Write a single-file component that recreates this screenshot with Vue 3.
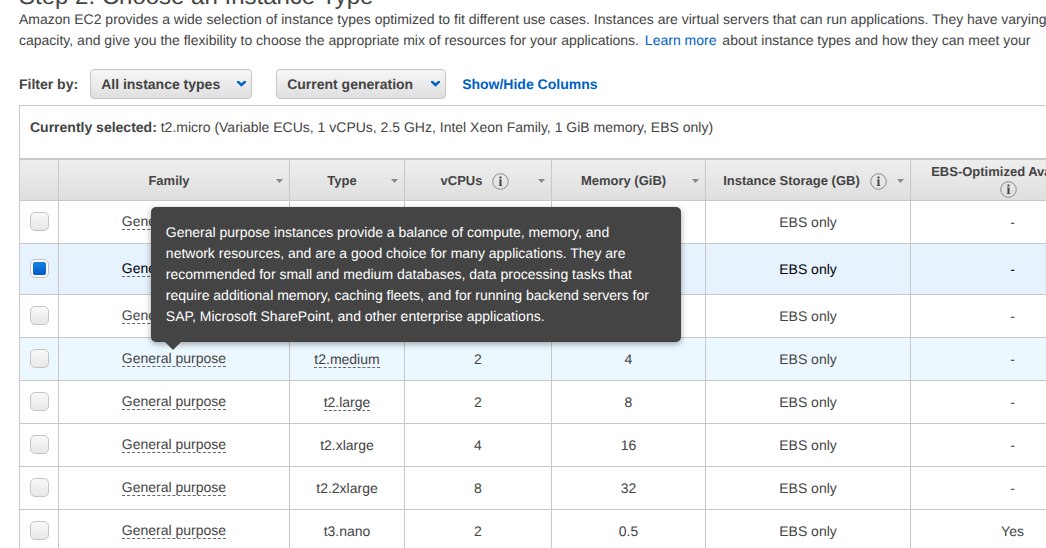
<script setup>
import { ref } from 'vue'

const columns = [
  { label: 'Family', info: false, sortable: true },
  { label: 'Type', info: false, sortable: true },
  { label: 'vCPUs', info: true, sortable: true },
  { label: 'Memory (GiB)', info: false, sortable: true },
  { label: 'Instance Storage (GB)', info: true, sortable: true },
  { label: 'EBS-Optimized Available', info: true, sortable: false },
]

const rows = [
  { type: 't2.nano', hint: true, cpu: '1', memory: '0.5', ebs: '-' },
  { type: 't2.micro', hint: true, cpu: '1', memory: '1', ebs: '-' },
  { type: 't2.small', hint: true, cpu: '1', memory: '2', ebs: '-' },
  { type: 't2.medium', hint: true, cpu: '2', memory: '4', ebs: '-' },
  { type: 't2.large', hint: true, cpu: '2', memory: '8', ebs: '-' },
  { type: 't2.xlarge', hint: false, cpu: '4', memory: '16', ebs: '-' },
  { type: 't2.2xlarge', hint: false, cpu: '8', memory: '32', ebs: '-' },
  { type: 't3.nano', hint: false, cpu: '2', memory: '0.5', ebs: 'Yes' },
]

const selected = ref('t2.micro')
const hovered = ref('t2.medium')
</script>

<template>
  <main class="page">
    <h1 class="title">Step 2: Choose an Instance Type</h1>
    <p class="intro">
      Amazon EC2 provides a wide selection of instance types optimized to fit different use cases. Instances are virtual servers that can run applications. They have varying<br>
      capacity, and give you the flexibility to choose the appropriate mix of resources for your applications. <a class="learn" href="#">Learn more</a> about instance types and how they can meet your
    </p>

    <div class="filters">
      <span class="filter-label">Filter by:</span>
      <button class="filter types" type="button">
        All instance types
        <svg class="chevron" width="9" height="6" viewBox="0 0 9 6"><path d="M0 0H2L4.500 2.300L7 0H9V1.500L4.500 5.800L0 1.500Z" /></svg>
      </button>
      <button class="filter generation" type="button">
        Current generation
        <svg class="chevron" width="9" height="6" viewBox="0 0 9 6"><path d="M0 0H2L4.500 2.300L7 0H9V1.500L4.500 5.800L0 1.500Z" /></svg>
      </button>
      <a class="columns-link" href="#">Show/Hide Columns</a>
    </div>

    <section class="panel">
      <p class="current"><strong>Currently selected:</strong> t2.micro (Variable ECUs, 1 vCPUs, 2.5 GHz, Intel Xeon Family, 1 GiB memory, EBS only)</p>

      <table class="grid">
        <colgroup>
          <col class="c-check"><col class="c-family"><col class="c-type"><col class="c-cpu">
          <col class="c-memory"><col class="c-storage"><col class="c-ebs">
        </colgroup>
        <thead>
          <tr>
            <th></th>
            <th v-for="col in columns" :key="col.label">
              <div class="head" :class="{ stacked: !col.sortable, 'with-info': col.info && col.sortable }">
                <span class="head-label">
                  <span>{{ col.label }}</span>
                  <svg v-if="col.info" class="info" width="17" height="17" viewBox="0 0 17 17">
                    <circle cx="8.500" cy="8.500" r="7.800" />
                    <path d="M7.500 3.500H9.500V5.500H7.500ZM7 6.500H9.500V12.200H10.200V13H6.800V12.200H7.500V7.300H7Z" />
                  </svg>
                </span>
                <svg v-if="col.sortable" class="sort" width="7" height="4" viewBox="0 0 7 4"><path d="M0 0H7L3.500 4Z" /></svg>
              </div>
            </th>
          </tr>
        </thead>
        <tbody>
          <tr
            v-for="row in rows"
            :key="row.type"
            :class="{ selected: row.type === selected, hovered: row.type === hovered }"
          >
            <td><input v-model="selected" class="check" type="radio" name="instance" :value="row.type" :aria-label="row.type"></td>
            <td class="family">
              <span class="hint">General purpose<span v-if="row.type === hovered" class="tip" role="tooltip">General purpose instances provide a balance of compute, memory, and network resources, and are a good choice for many applications. They are recommended for small and medium databases, data processing tasks that require additional memory, caching fleets, and for running backend servers for SAP, Microsoft SharePoint, and other enterprise applications.</span></span>
            </td>
            <td><span :class="{ hint: row.hint }">{{ row.type }}</span></td>
            <td>{{ row.cpu }}</td>
            <td>{{ row.memory }}</td>
            <td>EBS only</td>
            <td>{{ row.ebs }}</td>
          </tr>
        </tbody>
      </table>
    </section>
  </main>
</template>

<style>
html,
body {
  margin: 0;
  height: 100%;
  overflow: hidden;
  background: #fff;
}
</style>

<style scoped>
.page {
  height: 100vh;
  overflow: hidden;
  padding-left: 19px;
  box-sizing: border-box;
  color: #444;
  font: 14px/21px "Liberation Sans", Arial, sans-serif;
  text-rendering: geometricPrecision;
}

.title {
  margin: -15px 0 0;
  font-size: 24px;
  line-height: 24px;
  font-weight: 400;
  white-space: nowrap;
}

.intro {
  margin: 0;
  white-space: nowrap;
}

a {
  color: #0061c8;
  text-decoration: none;
}

.learn {
  margin: 0 2px;
}

.filters {
  display: flex;
  align-items: center;
  margin-top: 18px;
  font-weight: 700;
}

.filter-label {
  margin-right: 12px;
}

.filter {
  display: flex;
  align-items: center;
  justify-content: space-between;
  height: 30px;
  padding: 0 5px 0 10px;
  border: 1px solid #c5c5c5;
  border-radius: 4px;
  background: linear-gradient(#f7f7f7, #dfdfdf);
  color: #444;
  font: inherit;
  text-rendering: inherit;
  white-space: nowrap;
}

.types {
  width: 162px;
  margin-right: 24px;
}

.generation {
  width: 170px;
  margin-right: 16px;
}

.chevron {
  fill: #0061c8;
}

.panel {
  margin-top: 6px;
  border-top: 1px solid #c8c8c8;
  border-left: 1px solid #c8c8c8;
}

.current {
  margin: 0;
  padding: 11px 10px 20px;
  white-space: nowrap;
}

.grid {
  width: 100%;
  min-width: 1095px;
  table-layout: fixed;
  border-collapse: separate;
  border-spacing: 0;
  border-top: 2px solid #c8c8c8;
}

.c-check { width: 39px; }
.c-family { width: 231px; }
.c-type { width: 115px; }
.c-cpu { width: 147px; }
.c-memory { width: 154px; }
.c-storage { width: 205px; }

th,
td {
  padding: 0;
  border-right: 1px solid #c8c8c8;
  border-bottom: 1px solid #c8c8c8;
  text-align: center;
  vertical-align: middle;
}

th {
  height: 40px;
  background: linear-gradient(#eee, #dfdfdf);
  font-size: 13px;
  line-height: 20px;
}

.head {
  display: flex;
  align-items: center;
  padding: 2px 6px 0 3px;
  white-space: nowrap;
}

.with-info {
  padding-left: 7px;
}

.head-label {
  flex: 1;
  display: flex;
  align-items: center;
  justify-content: center;
  gap: 10px;
}

.stacked {
  padding: 0 10px 0 1px;
}

.stacked .head-label {
  flex-direction: column;
  gap: 0;
  line-height: 18px;
}

.info circle {
  fill: none;
  stroke: #8a8a8a;
}

.info path {
  fill: #444;
}

.sort {
  fill: #888;
}

td {
  height: 42px;
}

.selected td {
  height: 50px;
  background: #e7f2ff;
  color: #000;
}

.hovered td {
  background: #ecf8ff;
}

.hint {
  display: inline-block;
  position: relative;
  line-height: 16px;
  border-bottom: 1px dashed #666;
}

.family {
  padding-bottom: 2px;
  height: 40px;
}

.selected .family {
  height: 48px;
}

.check {
  display: block;
  appearance: none;
  width: 19px;
  height: 19px;
  margin: 0 auto 1px;
  border: 1px solid #c5c5c5;
  border-radius: 5px;
  background: linear-gradient(#f8f8f8, #e8e8e8);
}

.check:checked {
  padding: 2px;
  background: linear-gradient(#1780e6, #005bc4) content-box, #fafafa;
}

.tip {
  position: absolute;
  z-index: 2;
  left: 29px;
  bottom: 24px;
  width: 530px;
  box-sizing: border-box;
  padding: 15px 20px 15px 15px;
  border-radius: 5px;
  background: #444;
  box-shadow: 0 2px 6px rgba(0, 0, 0, 0.35);
  color: #fff;
  line-height: 21px;
  text-align: left;
}

.tip::after {
  content: "";
  position: absolute;
  top: 100%;
  left: 14px;
  border: 8px solid transparent;
  border-top-color: #444;
  border-bottom: 0;
}
</style>
